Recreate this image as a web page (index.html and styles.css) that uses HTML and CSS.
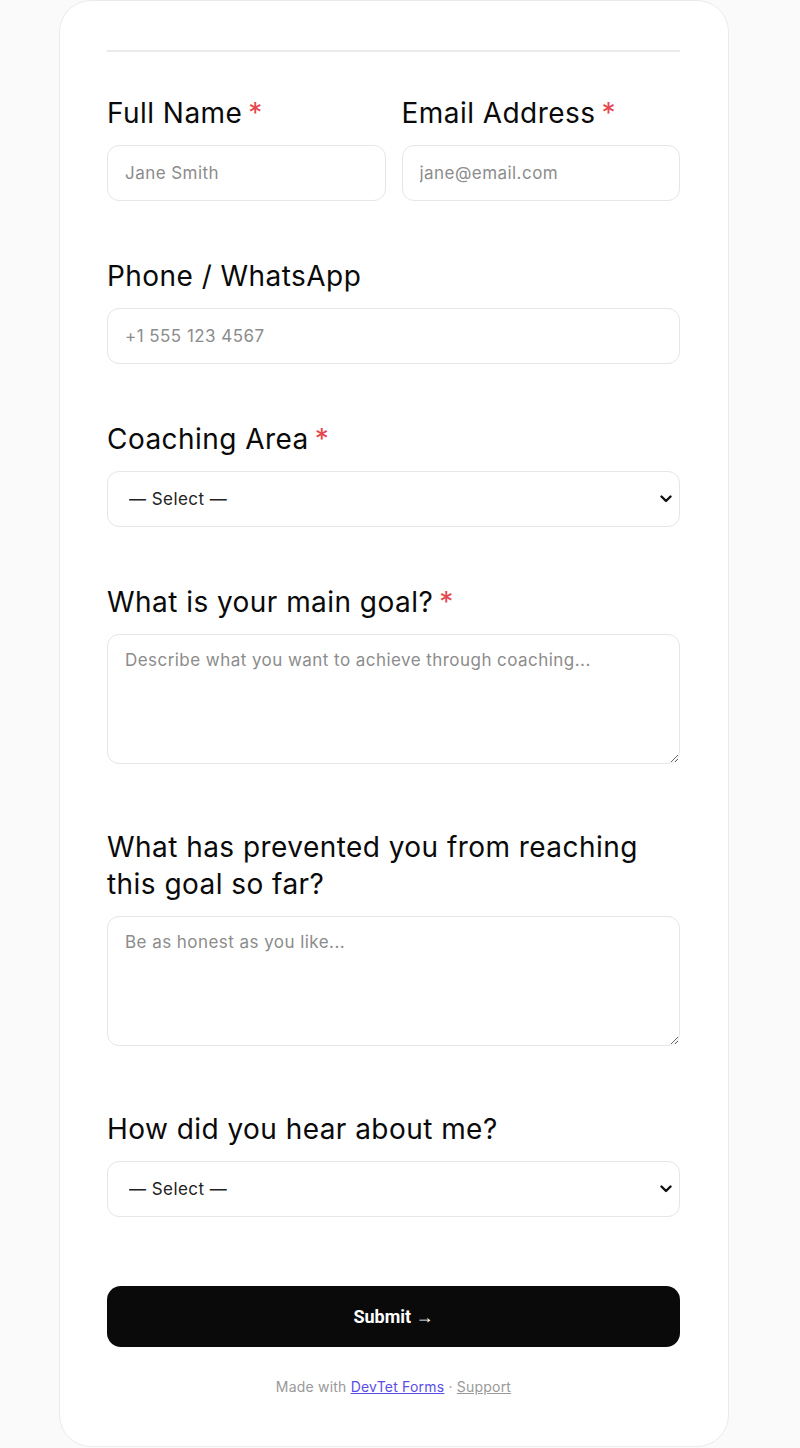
FILE: index.html
```html
<!DOCTYPE html>
<html lang="en">
<head>
    <meta charset="UTF-8">
    <meta name="viewport" content="width=device-width, initial-scale=1.0">
    <title>Coaching Application</title>
    <link rel="stylesheet" href="styles.css">
</head>
<body>
    <div class="card">
        <hr class="divider">

        <form class="coach-form">
            <div class="row">
                <div class="field">
                    <label for="name">Full Name<span class="req">*</span></label>
                    <input type="text" id="name" placeholder="Jane Smith">
                </div>
                <div class="field">
                    <label for="email">Email Address<span class="req">*</span></label>
                    <input type="text" id="email" placeholder="jane@email.com">
                </div>
            </div>

            <div class="field">
                <label for="phone">Phone / WhatsApp</label>
                <input type="text" id="phone" placeholder="+1 555 123 4567">
            </div>

            <div class="field">
                <label for="area">Coaching Area<span class="req">*</span></label>
                <div class="select-wrap">
                    <select id="area">
                        <option>— Select —</option>
                        <option>Career</option>
                        <option>Health</option>
                        <option>Relationships</option>
                    </select>
                    <svg class="chevron" width="12" height="8" viewBox="0 0 12 8"><path d="M1.5 1.5 L6 6 L10.5 1.5" fill="none" stroke="#111" stroke-width="2.4" stroke-linecap="round" stroke-linejoin="round"/></svg>
                </div>
            </div>

            <div class="field field-text">
                <label for="goal">What is your main goal?<span class="req">*</span></label>
                <textarea id="goal" placeholder="Describe what you want to achieve through coaching..."></textarea>
            </div>

            <div class="field field-text">
                <label for="blocker">What has prevented you from reaching this goal so far?</label>
                <textarea id="blocker" placeholder="Be as honest as you like..."></textarea>
            </div>

            <div class="field last">
                <label for="source">How did you hear about me?</label>
                <div class="select-wrap">
                    <select id="source">
                        <option>— Select —</option>
                        <option>Instagram</option>
                        <option>Friend</option>
                        <option>Google</option>
                    </select>
                    <svg class="chevron" width="12" height="8" viewBox="0 0 12 8"><path d="M1.5 1.5 L6 6 L10.5 1.5" fill="none" stroke="#111" stroke-width="2.4" stroke-linecap="round" stroke-linejoin="round"/></svg>
                </div>
            </div>

            <button type="submit">Submit →</button>
        </form>

        <p class="footer">Made with <a href="#" class="brand">DevTet Forms</a> · <a href="#" class="support">Support</a></p>
    </div>
</body>
</html>
```

FILE: styles.css
```css
body {
    margin: 0;
    background-color: #fafafa;
    font-family: Inter, "Noto Sans", sans-serif;
    color: #111;
}
.card {
    box-sizing: border-box;
    width: 670px;
    height: 1447px;
    margin-left: 59px;
    background-color: #fff;
    border: 1px solid #ebebeb;
    border-radius: 32px;
    padding: 49px 48px 0 47px;
}
.divider {
    border: none;
    border-top: 2px solid #ebebeb;
    margin: 0 0 43px 0;
}
.row {
    display: grid;
    grid-template-columns: 1fr 1fr;
    gap: 16px;
}
.field {
    margin-bottom: 57px;
}
.field-text {
    margin-bottom: 65px;
}
.field.last {
    margin-bottom: 0;
}
label {
    display: block;
    font-size: 28px;
    line-height: 37px;
    font-weight: 400;
    letter-spacing: 0.45px;
    color: #0a0a0a;
    margin-bottom: 13px;
}
.req {
    color: #e5484d;
    margin-left: 6px;
}
input[type="text"], select, textarea {
    display: block;
    box-sizing: border-box;
    width: 100%;
    height: 56px;
    padding: 0 17px;
    border: 1px solid #e6e6e6;
    border-radius: 12px;
    background-color: #fff;
    font-family: Inter, sans-serif;
    font-size: 17px;
    letter-spacing: 0.45px;
    color: #222;
}
.select-wrap {
    position: relative;
}
select {
    appearance: none;
    padding: 0 36px 0 21px;
}
.chevron {
    position: absolute;
    right: 8px;
    top: 24px;
}
textarea {
    height: 130px;
    padding: 15px 17px;
    resize: vertical;
}
::placeholder {
    color: #8c8c8c;
}
button {
    display: block;
    width: 100%;
    height: 61px;
    margin-top: 69px;
    background-color: #0a0a0a;
    color: #fff;
    border: none;
    border-radius: 14px;
    font-family: Roboto, Arial, sans-serif;
    font-size: 18px;
    font-weight: bold;
    cursor: pointer;
}
.footer {
    text-align: center;
    font-family: Inter, sans-serif;
    font-size: 14px;
    letter-spacing: 0.2px;
    color: #999;
    margin: 31px 0 0 0;
}
.brand {
    color: #5b4ee6;
}
.support {
    color: #999;
}
```
